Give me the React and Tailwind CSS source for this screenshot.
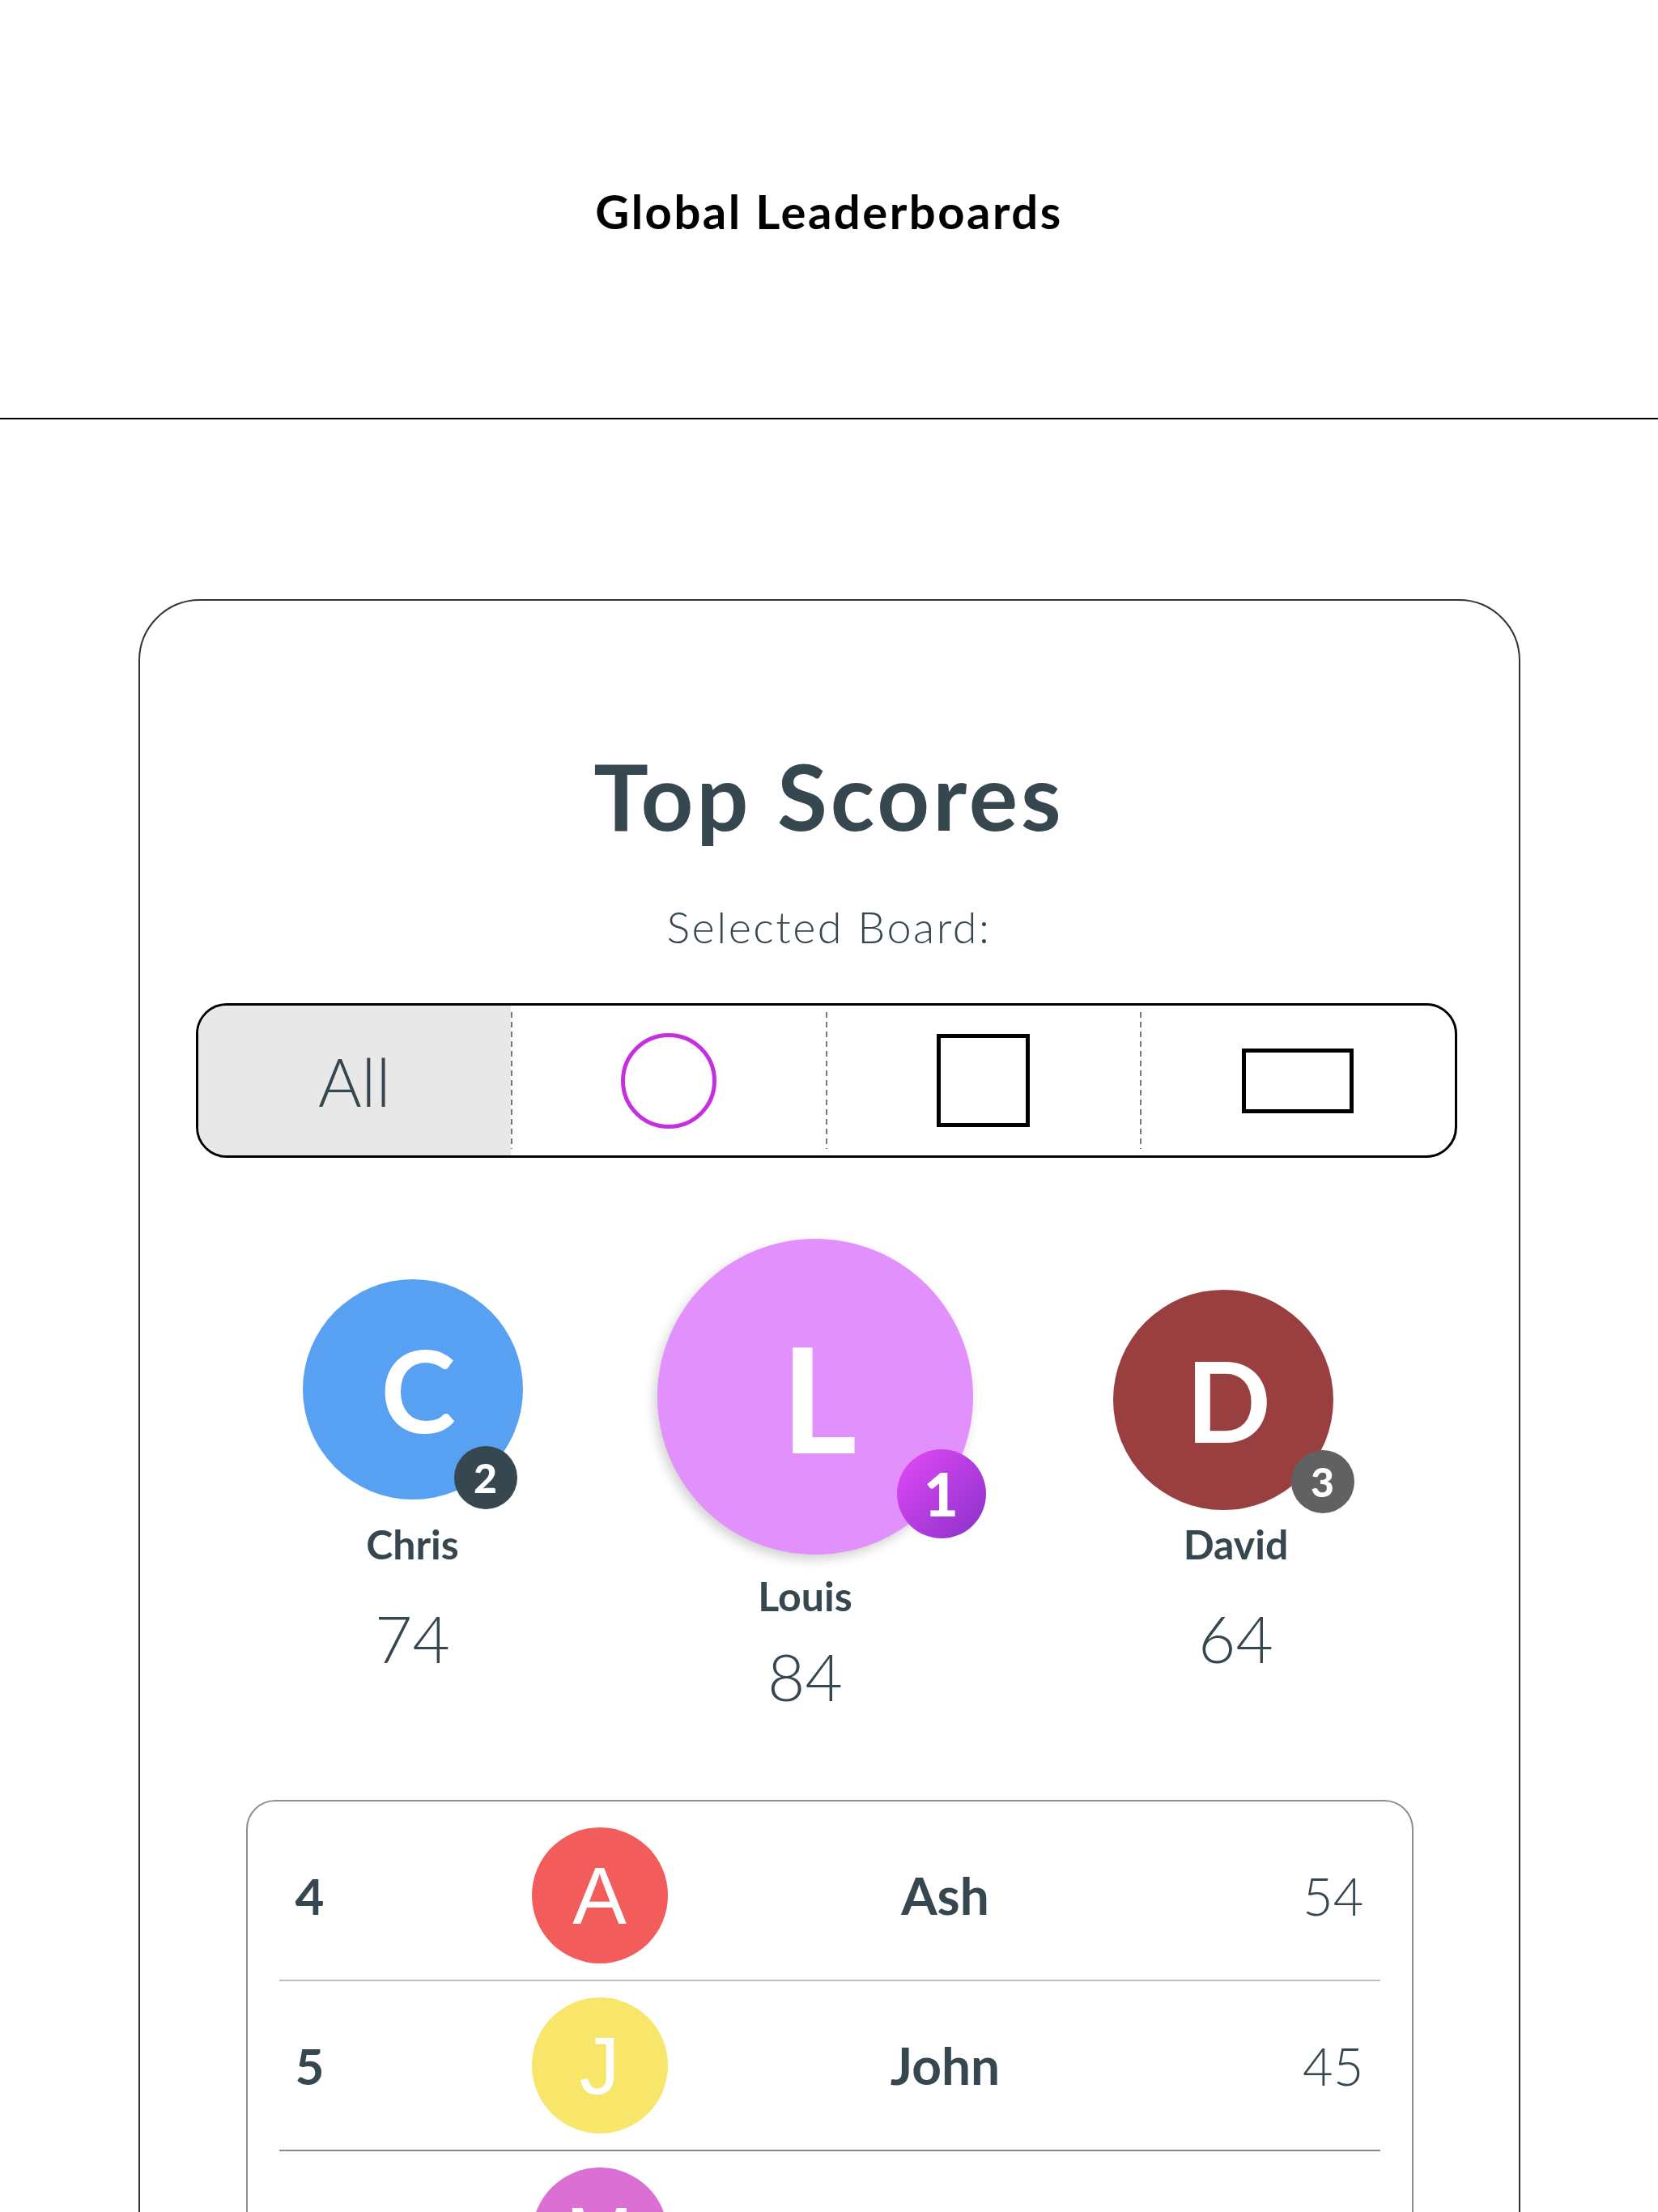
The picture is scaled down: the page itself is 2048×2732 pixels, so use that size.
const rows = [
  { rank: 4, letter: 'A', name: 'Ash', score: 54, color: 'bg-[#f25c5a]', line: 'border-[#bdbdbd]' },
  { rank: 5, letter: 'J', name: 'John', score: 45, color: 'bg-[#f7e66a]', line: 'border-[#8a8a8a]' },
  { rank: 6, letter: 'M', name: 'Maya', score: 38, color: 'bg-[#dc6fd4]', line: 'border-[#bdbdbd]' },
  { rank: 7, letter: 'S', name: 'Sam', score: 31, color: 'bg-[#4db6ac]', line: 'border-transparent' },
];

function Divider() {
  return <div className="my-[8px] w-[2px] bg-[repeating-linear-gradient(to_bottom,#7a7a7a_0px,#7a7a7a_7px,transparent_7px,transparent_12px)]" />;
}

function BoardPicker() {
  return (
    <div className="ml-[69px] mt-[67px] flex h-[191px] w-[1558px] overflow-hidden rounded-[38px] border-[3px] border-black">
      <div className="flex flex-1 items-center justify-center bg-[#e8e8e8]">
        <span className="text-[82px] font-light leading-none">All</span>
      </div>
      <Divider />
      <div className="flex flex-1 items-center justify-center">
        <div className="h-[118px] w-[118px] rounded-full border-[5px] border-[#c62fe0]" />
      </div>
      <Divider />
      <div className="flex flex-1 items-center justify-center">
        <div className="h-[115px] w-[115px] border-[5px] border-black" />
      </div>
      <Divider />
      <div className="flex flex-1 items-center justify-center">
        <div className="h-[80px] w-[138px] border-[5px] border-black" />
      </div>
    </div>
  );
}

function Podium() {
  return (
    <div className="mt-[100px] flex items-start pl-[137px]">
      {/* second place */}
      <div className="flex w-[400px] flex-col items-center pt-[50px]">
        <div className="relative flex h-[272px] w-[272px] items-center justify-center rounded-full bg-[#58a0f1]">
          <span className="ml-[14px] text-[140px] font-bold leading-none text-white">C</span>
          <span className="absolute -bottom-[12px] right-[7px] flex h-[78px] w-[78px] items-center justify-center rounded-full bg-[#37474f] text-[50px] font-black leading-none text-white">2</span>
        </div>
        <p className="mt-[30px] text-[50px] font-bold leading-none">Chris</p>
        <p className="mt-[51px] text-[80px] font-light leading-none">74</p>
      </div>

      {/* first place */}
      <div className="ml-[85px] flex w-[400px] flex-col items-center">
        <div className="relative ml-[24px] flex h-[390px] w-[390px] items-center justify-center rounded-full bg-[#e291fc] shadow-[-4px_6px_14px_rgba(0,0,0,0.18)]">
          <span className="ml-[10px] text-[180px] font-bold leading-none text-white">L</span>
          <span className="absolute bottom-[20px] -right-[16px] flex h-[110px] w-[110px] items-center justify-center rounded-full bg-gradient-to-br from-[#e449f8] to-[#8a2fc8] text-[74px] font-black leading-none text-white">1</span>
        </div>
        <p className="mt-[26px] text-[50px] font-bold leading-none">Louis</p>
        <p className="mt-[34px] text-[80px] font-light leading-none">84</p>
      </div>

      {/* third place */}
      <div className="ml-[132px] flex w-[400px] flex-col items-center pt-[63px]">
        <div className="relative mr-[32px] flex h-[272px] w-[272px] items-center justify-center rounded-full bg-[#993f3f]">
          <span className="ml-[14px] text-[138px] font-bold leading-none text-white">D</span>
          <span className="absolute -bottom-[4px] -right-[26px] flex h-[78px] w-[78px] items-center justify-center rounded-full bg-[#616161] text-[50px] font-black leading-none text-white">3</span>
        </div>
        <p className="mt-[17px] text-[50px] font-bold leading-none">David</p>
        <p className="mt-[51px] text-[80px] font-light leading-none">64</p>
      </div>
    </div>
  );
}

function ScoreTable() {
  return (
    <div className="ml-[131px] mt-[113px] w-[1442px] rounded-[36px] border-2 border-[#8f8f8f] pt-[12px]">
      {rows.map((r) => (
        <div
          key={r.rank}
          className={`mx-[39px] grid grid-cols-[292px_170px_682px_176px] items-center border-b-2 px-[20px] py-[20px] ${r.line}`}
        >
          <span className="text-[62px] font-bold leading-none">{r.rank}</span>
          <div className={`flex h-[168px] w-[168px] items-center justify-center rounded-full ${r.color}`}>
            <span className="font-['Liberation_Sans',sans-serif] text-[100px] leading-none text-white">{r.letter}</span>
          </div>
          <span className="text-center text-[64px] font-bold leading-none">{r.name}</span>
          <span className="text-right text-[65px] font-light leading-none">{r.score}</span>
        </div>
      ))}
    </div>
  );
}

export default function App() {
  return (
    <div className="min-h-screen bg-white font-['Lato',sans-serif] text-[#37474f]">
      <header className="flex h-[518px] items-center justify-center border-b-2 border-black pt-[6px]">
        <h1 className="text-[58px] font-bold leading-none tracking-[2.5px] text-black">Global Leaderboards</h1>
      </header>
      <main className="pb-[100px] pt-[222px]">
        <section className="mx-auto w-[1707px] rounded-[76px] border-2 border-[#333] pb-[120px] pt-[184px]">
          <h2 className="text-center text-[113px] font-bold leading-none tracking-[4px]">Top Scores</h2>
          <p className="mt-[79px] text-center text-[54px] font-light leading-none tracking-[2.5px]">Selected Board:</p>
          <BoardPicker />
          <Podium />
          <ScoreTable />
        </section>
      </main>
    </div>
  );
}
